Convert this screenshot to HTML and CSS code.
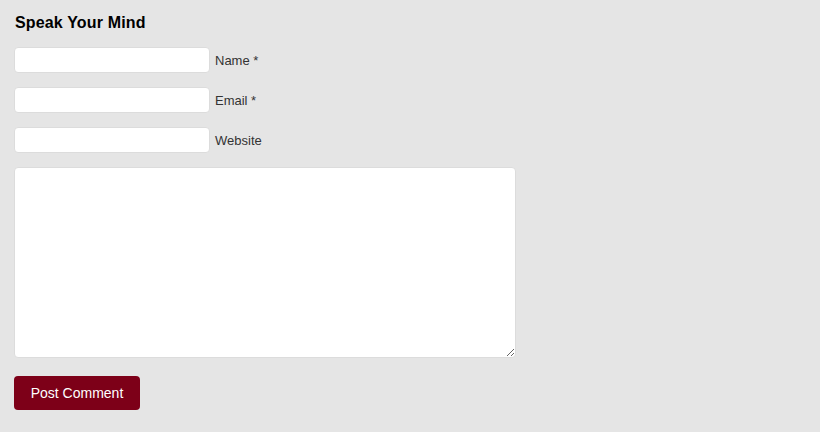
FILE: index.html
```html
<!DOCTYPE html>
<html lang="en">
<head>
    <meta charset="UTF-8">
    <meta name="viewport" content="width=device-width, initial-scale=1.0">
    <title>Speak Your Mind</title>
    <link rel="stylesheet" href="styles.css">
</head>
<body>
    <div class="respond">
        <h3>Speak Your Mind</h3>

        <form class="comment-form">
            <div class="form-row">
                <input type="text" id="author">
                <label for="author">Name *</label>
            </div>
            <div class="form-row">
                <input type="text" id="email">
                <label for="email">Email *</label>
            </div>
            <div class="form-row">
                <input type="text" id="url">
                <label for="url">Website</label>
            </div>

            <textarea id="comment"></textarea>

            <button type="submit" class="submit-btn">Post Comment</button>
        </form>
    </div>
</body>
</html>
```

FILE: styles.css
```css
body {
    font-family: 'Liberation Sans', Arial, sans-serif;
    background-color: #e5e5e5;
    margin: 0;
    padding: 0;
}
.respond {
    padding: 14px 14px;
}
.respond h3 {
    margin: 0 0 15px 1px;
    font-size: 16px;
    line-height: 18px;
    font-weight: bold;
    letter-spacing: 0.15px;
    color: #000;
}
.comment-form {
    display: flex;
    flex-direction: column;
    align-items: flex-start;
}
.form-row {
    display: flex;
    align-items: center;
    gap: 5px;
    margin-bottom: 14px;
}
.form-row input {
    box-sizing: border-box;
    width: 196px;
    height: 26px;
    margin: 0;
    padding: 4px 6px;
    border: 1px solid #dcdcdc;
    border-radius: 4px;
    background: #fff;
    font-size: 13px;
}
.form-row label {
    font-size: 13px;
    color: #333;
}
textarea {
    box-sizing: border-box;
    width: 502px;
    height: 191px;
    margin: 0 0 18px 0;
    padding: 6px;
    border: 1px solid #dcdcdc;
    border-radius: 4px;
    background: #fff;
    font-family: inherit;
    font-size: 13px;
}
input:focus, textarea:focus {
    outline: none;
    border-color: #c8c8c8;
}
.submit-btn {
    box-sizing: border-box;
    width: 126px;
    height: 34px;
    padding: 0;
    background-color: #7d0018;
    color: #fff;
    border: none;
    border-radius: 4px;
    font-family: inherit;
    font-size: 14px;
    cursor: pointer;
}
.submit-btn:hover {
    background-color: #5e0012;
}
```
